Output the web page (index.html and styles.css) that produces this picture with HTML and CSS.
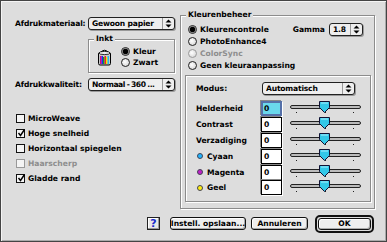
FILE: index.html
```html
<!DOCTYPE html>
<html>
<head>
<meta charset="utf-8">
<link rel="stylesheet" href="styles.css">
</head>
<body>
<div class="win">
  <div class="main">
    <div class="left">
      <div class="field">
        <span class="field-label">Afdrukmateriaal:</span>
        <div class="popup w87"><span class="pv">Gewoon papier</span><span class="arrows"><svg width="7" height="9" viewBox="0 0 7 9"><path d="M3.5 0.5 L6.5 3.5 L0.5 3.5 Z M0.5 5.5 L6.5 5.5 L3.5 8.5 Z" fill="#000"/></svg></span></div>
      </div>
      <div class="inkt box">
        <span class="legend">Inkt</span>
        <svg class="can" width="13" height="18" viewBox="0 0 13 18">
          <path d="M2.5 4.5 Q6.5 0 10.5 4.5" fill="none" stroke="#000" stroke-width="1"/>
          <rect x="0.5" y="4.5" width="12" height="12.5" rx="1.5" fill="#c8c8c8" stroke="#000"/>
          <ellipse cx="6.5" cy="5" rx="5.5" ry="1.6" fill="#eee" stroke="#000" stroke-width="0.8"/>
          <rect x="2" y="8" width="1.5" height="8" fill="#e0007a"/>
          <rect x="3.5" y="8" width="1.5" height="8" fill="#2222ee"/>
          <rect x="5" y="9" width="1.5" height="7" fill="#00aa22"/>
          <rect x="6.5" y="8" width="1.5" height="8" fill="#ee2222"/>
          <rect x="8" y="9" width="1.5" height="7" fill="#ffdd00"/>
          <rect x="9.5" y="8" width="1.5" height="8" fill="#22bbee"/>
        </svg>
        <div class="radios">
          <div class="rrow"><span class="radio on"></span><span>Kleur</span></div>
          <div class="rrow"><span class="radio"></span><span>Zwart</span></div>
        </div>
      </div>
      <div class="field f2">
        <span class="field-label">Afdrukkwaliteit:</span>
        <div class="popup w87"><span class="pv tight">Normaal - 360 ...</span><span class="arrows"><svg width="7" height="9" viewBox="0 0 7 9"><path d="M3.5 0.5 L6.5 3.5 L0.5 3.5 Z M0.5 5.5 L6.5 5.5 L3.5 8.5 Z" fill="#000"/></svg></span></div>
      </div>
      <div class="checks">
        <div class="crow"><span class="check"></span><span>MicroWeave</span></div>
        <div class="crow"><span class="check"><svg width="9" height="9" viewBox="0 0 9 9"><path d="M1.5 4 L3.5 6.5 L7.5 0.5" fill="none" stroke="#000" stroke-width="1.4"/></svg></span><span>Hoge snelheid</span></div>
        <div class="crow"><span class="check"></span><span>Horizontaal spiegelen</span></div>
        <div class="crow dis"><span class="check"></span><span>Haarscherp</span></div>
        <div class="crow"><span class="check"><svg width="9" height="9" viewBox="0 0 9 9"><path d="M1.5 4 L3.5 6.5 L7.5 0.5" fill="none" stroke="#000" stroke-width="1.4"/></svg></span><span>Gladde rand</span></div>
      </div>
    </div>

    <div class="kb box">
      <span class="legend">Kleurenbeheer</span>
      <div class="kradios">
        <div class="rrow r12"><span class="radio on"></span><span>Kleurencontrole</span>
          <div class="gamma"><span>Gamma</span><div class="popup w34"><span class="pv">1.8</span><span class="arrows"><svg width="7" height="9" viewBox="0 0 7 9"><path d="M3.5 0.5 L6.5 3.5 L0.5 3.5 Z M0.5 5.5 L6.5 5.5 L3.5 8.5 Z" fill="#000"/></svg></span></div></div>
        </div>
        <div class="rrow r12"><span class="radio"></span><span>PhotoEnhance4</span></div>
        <div class="rrow r12 dis"><span class="radio"></span><span>ColorSync</span></div>
        <div class="rrow r12"><span class="radio"></span><span>Geen kleuraanpassing</span></div>
      </div>
      <div class="inner box">
        <div class="modus">
          <span class="slabel">Modus:</span>
          <div class="popup w93"><span class="pv">Automatisch</span><span class="arrows"><svg width="7" height="9" viewBox="0 0 7 9"><path d="M3.5 0.5 L6.5 3.5 L0.5 3.5 Z M0.5 5.5 L6.5 5.5 L3.5 8.5 Z" fill="#000"/></svg></span></div>
        </div>
        <div class="srows">
          <div class="srow"><span class="slabel">Helderheid</span><span class="num focus">0</span><div class="slider"><span class="track"></span><span class="ticks"><i></i><i></i><i></i></span><svg class="thumb" width="11" height="12" viewBox="0 0 11 12"><path d="M0.5 0.5 H10.5 V6.5 L5.5 11.5 L0.5 6.5 Z" fill="#33c8e8" stroke="#113"/><path d="M2 2 H9" stroke="#a8f0ff"/></svg></div></div>
          <div class="srow"><span class="slabel">Contrast</span><span class="num">0</span><div class="slider"><span class="track"></span><span class="ticks"><i></i><i></i><i></i></span><svg class="thumb" width="11" height="12" viewBox="0 0 11 12"><path d="M0.5 0.5 H10.5 V6.5 L5.5 11.5 L0.5 6.5 Z" fill="#33c8e8" stroke="#113"/><path d="M2 2 H9" stroke="#a8f0ff"/></svg></div></div>
          <div class="srow"><span class="slabel">Verzadiging</span><span class="num">0</span><div class="slider"><span class="track"></span><span class="ticks"><i></i><i></i><i></i></span><svg class="thumb" width="11" height="12" viewBox="0 0 11 12"><path d="M0.5 0.5 H10.5 V6.5 L5.5 11.5 L0.5 6.5 Z" fill="#33c8e8" stroke="#113"/><path d="M2 2 H9" stroke="#a8f0ff"/></svg></div></div>
          <div class="srow"><span class="slabel"><i class="dot cyan"></i>Cyaan</span><span class="num">0</span><div class="slider"><span class="track"></span><span class="ticks"><i></i><i></i><i></i></span><svg class="thumb" width="11" height="12" viewBox="0 0 11 12"><path d="M0.5 0.5 H10.5 V6.5 L5.5 11.5 L0.5 6.5 Z" fill="#33c8e8" stroke="#113"/><path d="M2 2 H9" stroke="#a8f0ff"/></svg></div></div>
          <div class="srow"><span class="slabel"><i class="dot magenta"></i>Magenta</span><span class="num">0</span><div class="slider"><span class="track"></span><span class="ticks"><i></i><i></i><i></i></span><svg class="thumb" width="11" height="12" viewBox="0 0 11 12"><path d="M0.5 0.5 H10.5 V6.5 L5.5 11.5 L0.5 6.5 Z" fill="#33c8e8" stroke="#113"/><path d="M2 2 H9" stroke="#a8f0ff"/></svg></div></div>
          <div class="srow"><span class="slabel"><i class="dot yellow"></i>Geel</span><span class="num">0</span><div class="slider"><span class="track"></span><span class="ticks"><i></i><i></i><i></i></span><svg class="thumb" width="11" height="12" viewBox="0 0 11 12"><path d="M0.5 0.5 H10.5 V6.5 L5.5 11.5 L0.5 6.5 Z" fill="#33c8e8" stroke="#113"/><path d="M2 2 H9" stroke="#a8f0ff"/></svg></div></div>
        </div>
      </div>
    </div>
  </div>
  <div class="footer">
    <span class="help">?</span>
    <span class="btn w76">Instell. opslaan...</span>
    <span class="btn w57">Annuleren</span>
    <span class="okring"><span class="btn ok">OK</span></span>
  </div>
</div>
</body>
</html>
```

FILE: styles.css
```css
* { box-sizing: border-box; }
body {
  margin: 0;
  font-family: "DejaVu Sans", Verdana, sans-serif;
  font-weight: bold;
  font-size: 7.6px;
  color: #000;
  background: #fff;
}
.win {
  width: 387px;
  height: 242px;
  background: #dddddd;
  border: 1px solid #444;
  box-shadow: inset 1px 1px #f4f4f4, inset -1px -1px #aaa;
  display: flex;
  flex-direction: column;
}
.main {
  display: flex;
  height: 207px;
  flex: none;
}
.left {
  width: 179px;
  padding: 16px 0 0 14px;
  flex: none;
}
.field {
  display: flex;
  align-items: center;
  height: 13px;
}
.field-label {
  width: 73px;
  flex: none;
  white-space: nowrap;
  letter-spacing: -0.15px;
}
.f2 { margin-top: 5px; }

.popup {
  height: 13px;
  border: 1px solid #222;
  border-radius: 3px;
  background: #eeeeee;
  box-shadow: 1px 1px #999;
  display: flex;
  align-items: center;
  padding-left: 3px;
  flex: none;
  white-space: nowrap;
  overflow: hidden;
}
.pv { flex: 1; overflow: hidden; letter-spacing: -0.2px; }
.pv.tight { letter-spacing: -0.45px; word-spacing: -0.5px; }
.arrows {
  width: 12px;
  height: 100%;
  border-left: 1px solid #999;
  display: flex;
  align-items: center;
  justify-content: center;
  flex: none;
}
.w87 { width: 87px; }
.w34 { width: 34px; }
.w93 { width: 93px; }

.box {
  border: 1px solid #8c8c8c;
  box-shadow: 1px 1px #fff, inset 1px 1px #fff;
  position: relative;
}
.legend {
  position: absolute;
  top: -7px;
  left: 5px;
  padding: 0 2px;
  background: #dddddd;
  line-height: 12px;
}

.inkt {
  margin: 9px 0 0 73px;
  width: 87px;
  height: 34px;
  display: flex;
  align-items: center;
  padding: 2px 0 0 9px;
}
.can { flex: none; }
.radios { margin-left: 10px; }
.rrow {
  display: flex;
  align-items: center;
  height: 11px;
  white-space: nowrap;
}
.r12 { height: 12px; }
.radio {
  width: 9px;
  height: 9px;
  border-radius: 50%;
  border: 1px solid #222;
  background: radial-gradient(circle at 40% 40%, #fff 0, #ddd 70%);
  margin-right: 3px;
  flex: none;
}
.radio.on {
  background: radial-gradient(circle at 50% 50%, #000 0 2.2px, #555 2.8px, #ddd 3.4px);
}
.dis { color: #8e8e8e; }
.dis .radio, .dis .check { border-color: #999; }

.checks {
  margin-top: 20px;
  padding-left: 1px;
}
.crow {
  display: flex;
  align-items: center;
  height: 15px;
  white-space: nowrap;
}
.check {
  width: 9px;
  height: 9px;
  border: 1px solid #111;
  background: #f4f4f4;
  margin-right: 3px;
  flex: none;
  display: flex;
  align-items: center;
  justify-content: center;
}
.check svg { margin: -1px -2px 0 0; }

.kb {
  width: 195px;
  height: 194px;
  margin-top: 14px;
  padding: 7px 3px 6px 4px;
}
.kradios { padding-left: 3px; }
.gamma {
  margin-left: auto;
  margin-right: 8px;
  display: flex;
  align-items: center;
  gap: 4px;
}
.inner {
  margin-top: 4px;
  width: 186px;
  height: 127px;
  padding: 6px 0 0 10px;
}
.modus {
  display: flex;
  align-items: center;
  height: 13px;
}
.slabel {
  width: 65px;
  flex: none;
  display: flex;
  align-items: center;
  white-space: nowrap;
}
.modus .slabel { width: 66px; }
.srows { margin-top: 6px; }
.srow {
  display: flex;
  align-items: center;
  height: 15.8px;
}
.num {
  width: 21px;
  height: 15px;
  border: 1px solid #000;
  background: #fff;
  box-shadow: -1px -1px #888, 1px 1px #fff;
  padding: 1px 0 0 2px;
  line-height: 11px;
  flex: none;
}
.num.focus {
  background: #6ad8ec;
  border: 2px solid #5570a8;
  padding: 0 0 0 1px;
}
.slider {
  position: relative;
  width: 71px;
  height: 15px;
  margin-left: 8px;
  flex: none;
}
.track {
  display: block;
  margin-top: 4px;
  height: 4px;
  border: 1px solid #222;
  border-radius: 2px;
  background: #bbb;
}
.ticks {
  display: flex;
  justify-content: space-between;
  padding: 0 7px 0 6px;
  margin-top: 3px;
}
.ticks i {
  width: 1px;
  height: 1px;
  background: #222;
}
.thumb {
  position: absolute;
  left: 29px;
  top: 0;
}
.dot {
  width: 6px;
  height: 6px;
  border-radius: 50%;
  margin: 0 4px 0 1px;
  border: 1px solid #445;
}
.cyan { background: #20b4ff; }
.magenta { background: #c020c8; }
.yellow { background: #ffee10; }

.footer {
  flex: 1;
  display: flex;
  align-items: center;
  justify-content: flex-end;
  padding: 0 12px 2px 0;
}
.help {
  width: 13px;
  height: 13px;
  border: 1px solid #222;
  background: #e8e8e8;
  box-shadow: inset -1px -1px #999, inset 1px 1px #fff;
  color: #1a2dcc;
  font-size: 11px;
  line-height: 11px;
  text-align: center;
  margin-right: 10px;
}
.btn {
  height: 13px;
  border: 1px solid #111;
  border-radius: 3px;
  background: #eeeeee;
  box-shadow: inset -1px -1px #aaa, inset 1px 1px #fff;
  display: flex;
  align-items: center;
  justify-content: center;
  white-space: nowrap;
}
.w76 { width: 76px; margin-right: 5px; }
.w57 { width: 57px; margin-right: 7px; }
.okring {
  width: 59px;
  height: 18px;
  border: 2px solid #111;
  border-radius: 5px;
  padding: 1px;
  display: flex;
}
.ok { flex: 1; height: auto; }
```
